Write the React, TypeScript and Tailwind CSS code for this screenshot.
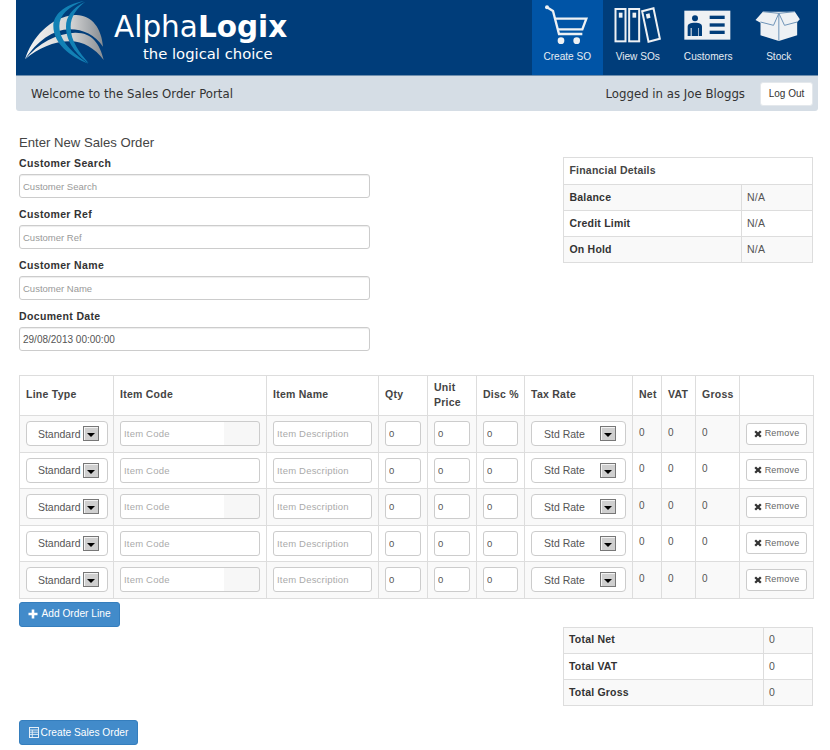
const arial = 'font-["Liberation_Sans",Arial,sans-serif]';

const navItems = ['Create SO', 'View SOs', 'Customers', 'Stock'];

function Logo() {
  return (
    <svg width="90" height="70" viewBox="0 0 270 210" className="shrink-0">
      <defs>
        <linearGradient id="swoop" x1="0" y1="0" x2="1" y2="0">
          <stop offset="0" stopColor="#f6f6f6" />
          <stop offset="0.6" stopColor="#d2d2d2" />
          <stop offset="1" stopColor="#868c92" />
        </linearGradient>
      </defs>
      <path d="M15 178 C35 115 90 50 165 45 C215 43 245 85 249 140 C225 105 190 88 150 88 C100 88 50 125 15 178 Z" fill="url(#swoop)" />
      <path d="M15 178 C55 130 110 100 165 98 C215 97 240 130 251 180 C225 145 190 124 150 124 C100 124 55 145 15 178 Z" fill="url(#swoop)" />
      <path d="M192 3 C130 15 100 45 100 78 C100 130 150 170 205 191 C160 160 118 125 118 78 C118 45 145 20 192 3 Z" fill="#1281b5" />
      <path d="M196 5 C155 25 138 50 138 80 C138 125 170 165 206 190 C178 155 152 125 152 80 C152 50 170 25 196 5 Z" fill="#1281b5" />
    </svg>
  );
}

// icon paths use the 3x crop coordinates of the nav strip, hence the odd viewBoxes
function NavIcon({ name }: { name: string }) {
  const white = '#eef1f4';
  if (name === 'Create SO') {
    return (
      <svg width="70.5" height="46" viewBox="-9 0 211.5 138">
        <circle cx="36" cy="22" r="6" fill={white} />
        <path d="M36 22 L54 33 L72 102 H142" fill="none" stroke={white} strokeWidth="7" />
        <path d="M60 56 H154 L142 88 H68" fill="none" stroke={white} strokeWidth="7" />
        <circle cx="78" cy="122" r="10" fill={white} />
        <circle cx="125" cy="122" r="10" fill={white} />
      </svg>
    );
  }
  if (name === 'View SOs') {
    return (
      <svg width="70.5" height="46" viewBox="202.5 0 211.5 138">
        <g fill="none" stroke={white} strokeWidth="6">
          <rect x="240" y="27" width="30" height="97" />
          <rect x="281" y="27" width="30" height="97" />
          <path d="M320 34 L354 25 L373 116 L339 125 Z" />
        </g>
        <rect x="250" y="38" width="11" height="15" fill={white} />
        <rect x="291" y="38" width="11" height="15" fill={white} />
        <path d="M331 43 L342 40 L345 53 L334 56 Z" fill={white} />
      </svg>
    );
  }
  if (name === 'Customers') {
    return (
      <svg width="70.5" height="46" viewBox="-6 0 211.5 138">
        <rect x="28" y="32" width="138" height="87" fill={white} />
        <circle cx="60" cy="55" r="9" fill="#003d7a" />
        <path d="M38 108 V80 C38 71 46 68 60 68 C74 68 81 71 81 80 V108 H72 V84 H70 V108 H50 V84 H47 V108 Z" fill="#003d7a" />
        <rect x="104" y="47" width="45" height="10" fill="#003d7a" />
        <rect x="104" y="70" width="45" height="10" fill="#003d7a" />
        <rect x="104" y="92" width="45" height="10" fill="#003d7a" />
      </svg>
    );
  }
  return (
    <svg width="70.5" height="46" viewBox="205.5 0 211.5 138">
      <path d="M240 60 L262 35 H358 L373 58 L365 66 V106 L310 123 L255 106 V68 Z" fill={white} />
      <path d="M310 40 V122 M310 40 L294 76 L255 66 M310 40 L327 76 L365 66 M262 35 L310 40 L358 35" fill="none" stroke="#6f94b8" strokeWidth="3" />
    </svg>
  );
}

function Header() {
  return (
    <div className="ml-4 w-[802px] font-['DejaVu_Sans',Verdana,sans-serif]">
      <div className="flex h-[75px] justify-between bg-[#003d7a]">
        <div className="flex pl-[4px]">
          <Logo />
          <div className="ml-[4px] text-white">
            <div className="mt-[11px] text-[29.5px] leading-[33px]">
              Alpha<span className="font-bold">Logix</span>
            </div>
            <div className="pl-[29px] text-[14.8px] leading-[20px]">the logical choice</div>
          </div>
        </div>
        <div className={`flex pr-[4px] ${arial}`}>
          {navItems.map((item, i) => (
            <div
              key={item}
              className={`flex w-[70.5px] flex-col items-center text-[10.1px] text-[#e6ecf2] ${i === 0 ? 'bg-[#0054a6]' : ''}`}
            >
              <NavIcon name={item} />
              <div className="mt-[4px] leading-[14px]">{item}</div>
            </div>
          ))}
        </div>
      </div>
      <div className="flex h-[36px] items-center justify-between rounded-b-[3px] border-t border-[#6f8fae] bg-[#d5dde5] pl-[15px] pr-[5px] text-[11.75px] text-[#333]">
        <span className="pt-[3px]">Welcome to the Sales Order Portal</span>
        <div className="flex items-center">
          <span className="pt-[3px]">Logged in as Joe Bloggs</span>
          <button className={`ml-[15px] h-[24px] w-[53px] rounded-[3px] border border-[#e4e8ec] bg-white text-[10px] text-[#333] ${arial}`}>
            Log Out
          </button>
        </div>
      </div>
    </div>
  );
}

function Field({ label, placeholder, value }: { label: string; placeholder: string; value?: string }) {
  return (
    <div className="mb-[9px]">
      <label className="mb-[3px] block text-[10.5px] font-bold leading-[15px] tracking-[0.35px] text-[#333]">{label}</label>
      <input
        readOnly
        placeholder={placeholder}
        value={value ?? ''}
        className="block h-[24px] w-full rounded-[3px] border border-[#ccc] bg-white px-[3px] text-[10px] text-[#555] shadow-[inset_0_1px_1px_rgba(0,0,0,0.075)] outline-none placeholder:text-[9.5px] placeholder:text-[#999]"
      />
    </div>
  );
}

function ArrowButton() {
  return (
    <span className="flex h-[15px] w-[16px] items-center justify-center border border-[#777] bg-[#cfcfcf] shadow-[inset_1px_1px_0_#f4f4f4]">
      <span className="mt-[3px] h-0 w-0 border-x-[4px] border-t-[4px] border-x-transparent border-t-black" />
    </span>
  );
}

function SummaryTable({ rows, divider }: { rows: string[][]; divider: string }) {
  return (
    <table className="w-[250px] table-fixed border-collapse border border-[#ddd] text-[10.5px] tracking-[0.2px]">
      <colgroup>
        <col className={divider} />
        <col />
      </colgroup>
      <tbody>
        {rows.map(([k, v], i) => (
          <tr key={k} className={`h-[26.3px] ${i % 2 === 0 ? 'bg-[#f9f9f9]' : 'bg-white'}`}>
            <td className="border border-[#ddd] px-[5px] font-bold text-[#333]">{k}</td>
            <td className="border border-[#ddd] px-[5px] text-[#555]">{v}</td>
          </tr>
        ))}
      </tbody>
    </table>
  );
}

const cellInput =
  'block h-[25px] w-full rounded-[3px] border border-[#ccc] px-[3px] text-[9.5px] tracking-[0.2px] text-[#555] outline-none placeholder:text-[#aaa]';

function TimesIcon() {
  return (
    <svg width="8" height="8" viewBox="0 0 8 8">
      <path d="M1.2 1.2 L6.8 6.8 M6.8 1.2 L1.2 6.8" stroke="#333" strokeWidth="2.3" fill="none" />
    </svg>
  );
}

function OrderRow({ odd }: { odd: boolean }) {
  return (
    <tr className={`h-[36.5px] ${odd ? 'bg-[#f9f9f9]' : 'bg-white'}`}>
      <td className="border border-[#ddd] px-[5.5px]">
        <div className="flex h-[25px] items-center justify-end gap-[2px] rounded-[4px] border border-[#ccc] bg-white pr-[8px] text-[10.5px] text-[#555]">
          <span className="pt-[2px]">Standard</span>
          <ArrowButton />
        </div>
      </td>
      <td className="border border-[#ddd] px-[6px]">
        <input
          readOnly
          placeholder="Item Code"
          className={`${cellInput} ${odd ? 'bg-[linear-gradient(to_right,#fff_103px,#f7f7f7_103px)]' : 'bg-white'}`}
        />
      </td>
      <td className="border border-[#ddd] px-[6px]">
        <input readOnly placeholder="Item Description" className={`${cellInput} bg-white`} />
      </td>
      {[0, 1, 2].map((i) => (
        <td key={i} className="border border-[#ddd] px-[6px]">
          <input readOnly value="0" className={`${cellInput} bg-white`} />
        </td>
      ))}
      <td className="border border-[#ddd] px-[6px]">
        <div className="flex h-[25px] items-center justify-between rounded-[4px] border border-[#ccc] bg-white pl-[12px] pr-[9px] text-[10.5px] text-[#555]">
          <span className="pt-[2px]">Std Rate</span>
          <ArrowButton />
        </div>
      </td>
      {[0, 1, 2].map((i) => (
        <td key={i} className="border border-[#ddd] px-[6px] pb-[3px] text-[10px] text-[#555]">
          0
        </td>
      ))}
      <td className="border border-[#ddd] px-[6px]">
        <button className="flex h-[22px] w-[61px] items-center justify-center gap-[3px] rounded-[3px] border border-[#ccc] bg-white text-[9px] tracking-[0.2px] text-[#666]">
          <TimesIcon />
          Remove
        </button>
      </td>
    </tr>
  );
}

function Th({ children }: { children?: React.ReactNode }) {
  return (
    <th className="border border-[#ddd] px-[6px] pb-[2px] text-left text-[10.5px] font-bold leading-[14.5px] tracking-[0.25px] text-[#444]">
      {children}
    </th>
  );
}

export default function App() {
  return (
    <div className={`h-[750px] w-[830px] overflow-hidden bg-white ${arial}`}>
      <Header />

      <div className="ml-[19px] mt-[24px] w-[794px]">
        <div className="flex justify-between">
          <div className="w-[351px]">
            <h1 className="mb-[5px] text-[13.15px] font-normal leading-[16px] text-[#444]">Enter New Sales Order</h1>
            <Field label="Customer Search" placeholder="Customer Search" />
            <Field label="Customer Ref" placeholder="Customer Ref" />
            <Field label="Customer Name" placeholder="Customer Name" />
            <Field label="Document Date" placeholder="" value="29/08/2013 00:00:00" />
          </div>
          <div className="mt-[22px]">
            <table className="w-[250px] table-fixed border-collapse border border-[#ddd] text-[10.5px] tracking-[0.2px]">
              <colgroup>
                <col className="w-[178px]" />
                <col />
              </colgroup>
              <tbody>
                <tr className="h-[26.5px] bg-white">
                  <td colSpan={2} className="border border-[#ddd] px-[5.5px] font-bold text-[#444]">Financial Details</td>
                </tr>
                {[
                  ['Balance', 'N/A'],
                  ['Credit Limit', 'N/A'],
                  ['On Hold', 'N/A'],
                ].map(([k, v], i) => (
                  <tr key={k} className={`h-[26px] ${i % 2 === 0 ? 'bg-[#f9f9f9]' : 'bg-white'}`}>
                    <td className="border border-[#ddd] px-[5.5px] pt-[1px] font-bold text-[#333]">{k}</td>
                    <td className="border border-[#ddd] px-[5px] pt-[1px] text-[#555]">{v}</td>
                  </tr>
                ))}
              </tbody>
            </table>
          </div>
        </div>

        <table className="mt-[15px] w-[794px] table-fixed border-collapse border border-[#ddd]">
          <colgroup>
            <col className="w-[94px]" />
            <col className="w-[153px]" />
            <col className="w-[112px]" />
            <col className="w-[49px]" />
            <col className="w-[49px]" />
            <col className="w-[48px]" />
            <col className="w-[108px]" />
            <col className="w-[29px]" />
            <col className="w-[34px]" />
            <col className="w-[44px]" />
            <col className="w-[74px]" />
          </colgroup>
          <thead>
            <tr className="h-[40px] whitespace-nowrap">
              <Th>Line Type</Th>
              <Th>Item Code</Th>
              <Th>Item Name</Th>
              <Th>Qty</Th>
              <Th>Unit<br />Price</Th>
              <Th>Disc %</Th>
              <Th>Tax Rate</Th>
              <Th>Net</Th>
              <Th>VAT</Th>
              <Th>Gross</Th>
              <Th />
            </tr>
          </thead>
          <tbody>
            {[0, 1, 2, 3, 4].map((i) => (
              <OrderRow key={i} odd={i % 2 === 0} />
            ))}
          </tbody>
        </table>

        <button className="mt-[3px] flex h-[25px] w-[101px] items-center justify-center gap-[3px] rounded-[3px] border border-[#357ebd] bg-[#428bca] text-[10.2px] text-white">
          <svg width="10" height="10" viewBox="0 0 10 10">
            <path d="M5 0.5 V9.5 M0.5 5 H9.5" stroke="#fff" strokeWidth="2.6" fill="none" />
          </svg>
          Add Order Line
        </button>

        <div className="flex justify-end">
          <SummaryTable
            divider="w-[200px]"
            rows={[
              ['Total Net', '0'],
              ['Total VAT', '0'],
              ['Total Gross', '0'],
            ]}
          />
        </div>

        <button className="mt-[14px] flex h-[25px] w-[119px] items-center justify-center gap-[2px] rounded-[3px] border border-[#357ebd] bg-[#428bca] text-[10.2px] text-white">
          <svg width="10" height="11" viewBox="0 0 10 11">
            <rect x="0.5" y="0.5" width="9" height="10" fill="none" stroke="#e6eff7" />
            <path d="M0.5 3 H9.5 M0.5 5.2 H9.5 M0.5 7.4 H9.5 M3.3 3 V10" stroke="#e6eff7" strokeWidth="0.9" fill="none" />
          </svg>
          Create Sales Order
        </button>
      </div>
    </div>
  );
}
